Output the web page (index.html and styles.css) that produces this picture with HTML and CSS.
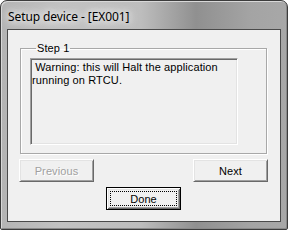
FILE: index.html
```html
<!DOCTYPE html>
<html>
<head>
<meta charset="utf-8">
<link rel="stylesheet" href="styles.css">
</head>
<body>
<div class="window">
  <div class="titlebar"><span class="title">Setup device - [EX001]</span></div>
  <div class="client">
    <fieldset class="group">
      <legend class="legend">Step 1</legend>
      <div class="textbox">&nbsp;Warning: this will Halt the application running on RTCU.</div>
    </fieldset>
    <div class="navrow">
      <button class="btn disabled">Previous</button>
      <button class="btn">Next</button>
    </div>
    <div class="donerow">
      <button class="btn default"><span class="focus">Done</span></button>
    </div>
  </div>
</div>
</body>
</html>
```
FILE: styles.css
```css
html, body {
  margin: 0;
  padding: 0;
  background: #ffffff;
}
.window {
  width: 288px;
  height: 230px;
  box-sizing: border-box;
  border: 1px solid #3c3c3c;
  border-radius: 7px 7px 2px 2px;
  background: linear-gradient(90deg, #b4b4b4 0px, #c2c2c2 60px, #bdbdbd 140px, #909090 195px, #a4a4a4 250px, #a8a8a8 288px);
  box-shadow: inset 1px 1px 0 #d8d8d8, inset -1px -1px 0 #8a8a8a;
  padding: 0 6px 7px 6px;
  display: flex;
  flex-direction: column;
  overflow: hidden;
}
.titlebar {
  height: 28px;
  display: flex;
  align-items: center;
  padding-left: 1px;
}
.title {
  font-family: "Noto Sans", "Open Sans", sans-serif;
  font-size: 12px;
  letter-spacing: -0.1px;
  color: #000;
  text-shadow: 0 0 6px #f6f6f6, 0 0 10px #f0f0f0, 0 0 14px #eaeaea;
  margin-top: 3px;
}
.client {
  flex: 1;
  background: #f0f0f0;
  border: 1px solid #4a4a4a;
  display: flex;
  flex-direction: column;
  padding: 12px 0 0 11px;
  font-family: "Liberation Sans", Arial, sans-serif;
  font-size: 11px;
  letter-spacing: 0.1px;
}
.group {
  margin: 0 0 0 1px;
  padding: 3px 0 8px 9px;
  width: 247px;
  box-sizing: border-box;
  border: 1px solid #a8a8a8;
  box-shadow: 1px 1px 0 #ffffff, inset 1px 1px 0 #ffffff;
  min-width: 0;
}
.legend {
  padding: 0 1px;
  margin-left: 6px;
  line-height: 13px;
  color: #000;
}
.textbox {
  width: 208px;
  height: 87px;
  box-sizing: border-box;
  border: 1px solid;
  border-color: #a0a0a0 #ffffff #ffffff #a0a0a0;
  box-shadow: inset 1px 1px 0 #696969, inset -1px -1px 0 #e3e3e3;
  padding: 2px 2px 0 1px;
  line-height: 13px;
  color: #000;
}
.navrow {
  display: flex;
  justify-content: space-between;
  width: 249px;
  margin-top: 5px;
}
.btn {
  width: 75px;
  height: 23px;
  box-sizing: border-box;
  background: #f0f0f0;
  border: 1px solid;
  border-color: #ffffff #696969 #696969 #ffffff;
  box-shadow: inset 1px 1px 0 #e3e3e3, inset -1px -1px 0 #a0a0a0;
  font-family: "Liberation Sans", Arial, sans-serif;
  font-size: 11px;
  letter-spacing: 0.1px;
  color: #000;
  padding: 0;
  margin: 0;
}
.btn.disabled {
  color: #a0a0a0;
  text-shadow: 1px 1px 0 #ffffff;
}
.donerow {
  display: flex;
  margin-top: 5px;
  padding-left: 87px;
}
.btn.default {
  border: 1px solid #000;
  box-shadow: inset 1px 1px 0 #ffffff, inset -1px -1px 0 #696969, inset 2px 2px 0 #e3e3e3, inset -2px -2px 0 #a0a0a0;
  padding: 3px;
  display: flex;
}
.focus {
  flex: 1;
  border: 1px dotted #000;
  display: flex;
  align-items: center;
  justify-content: center;
}
```
